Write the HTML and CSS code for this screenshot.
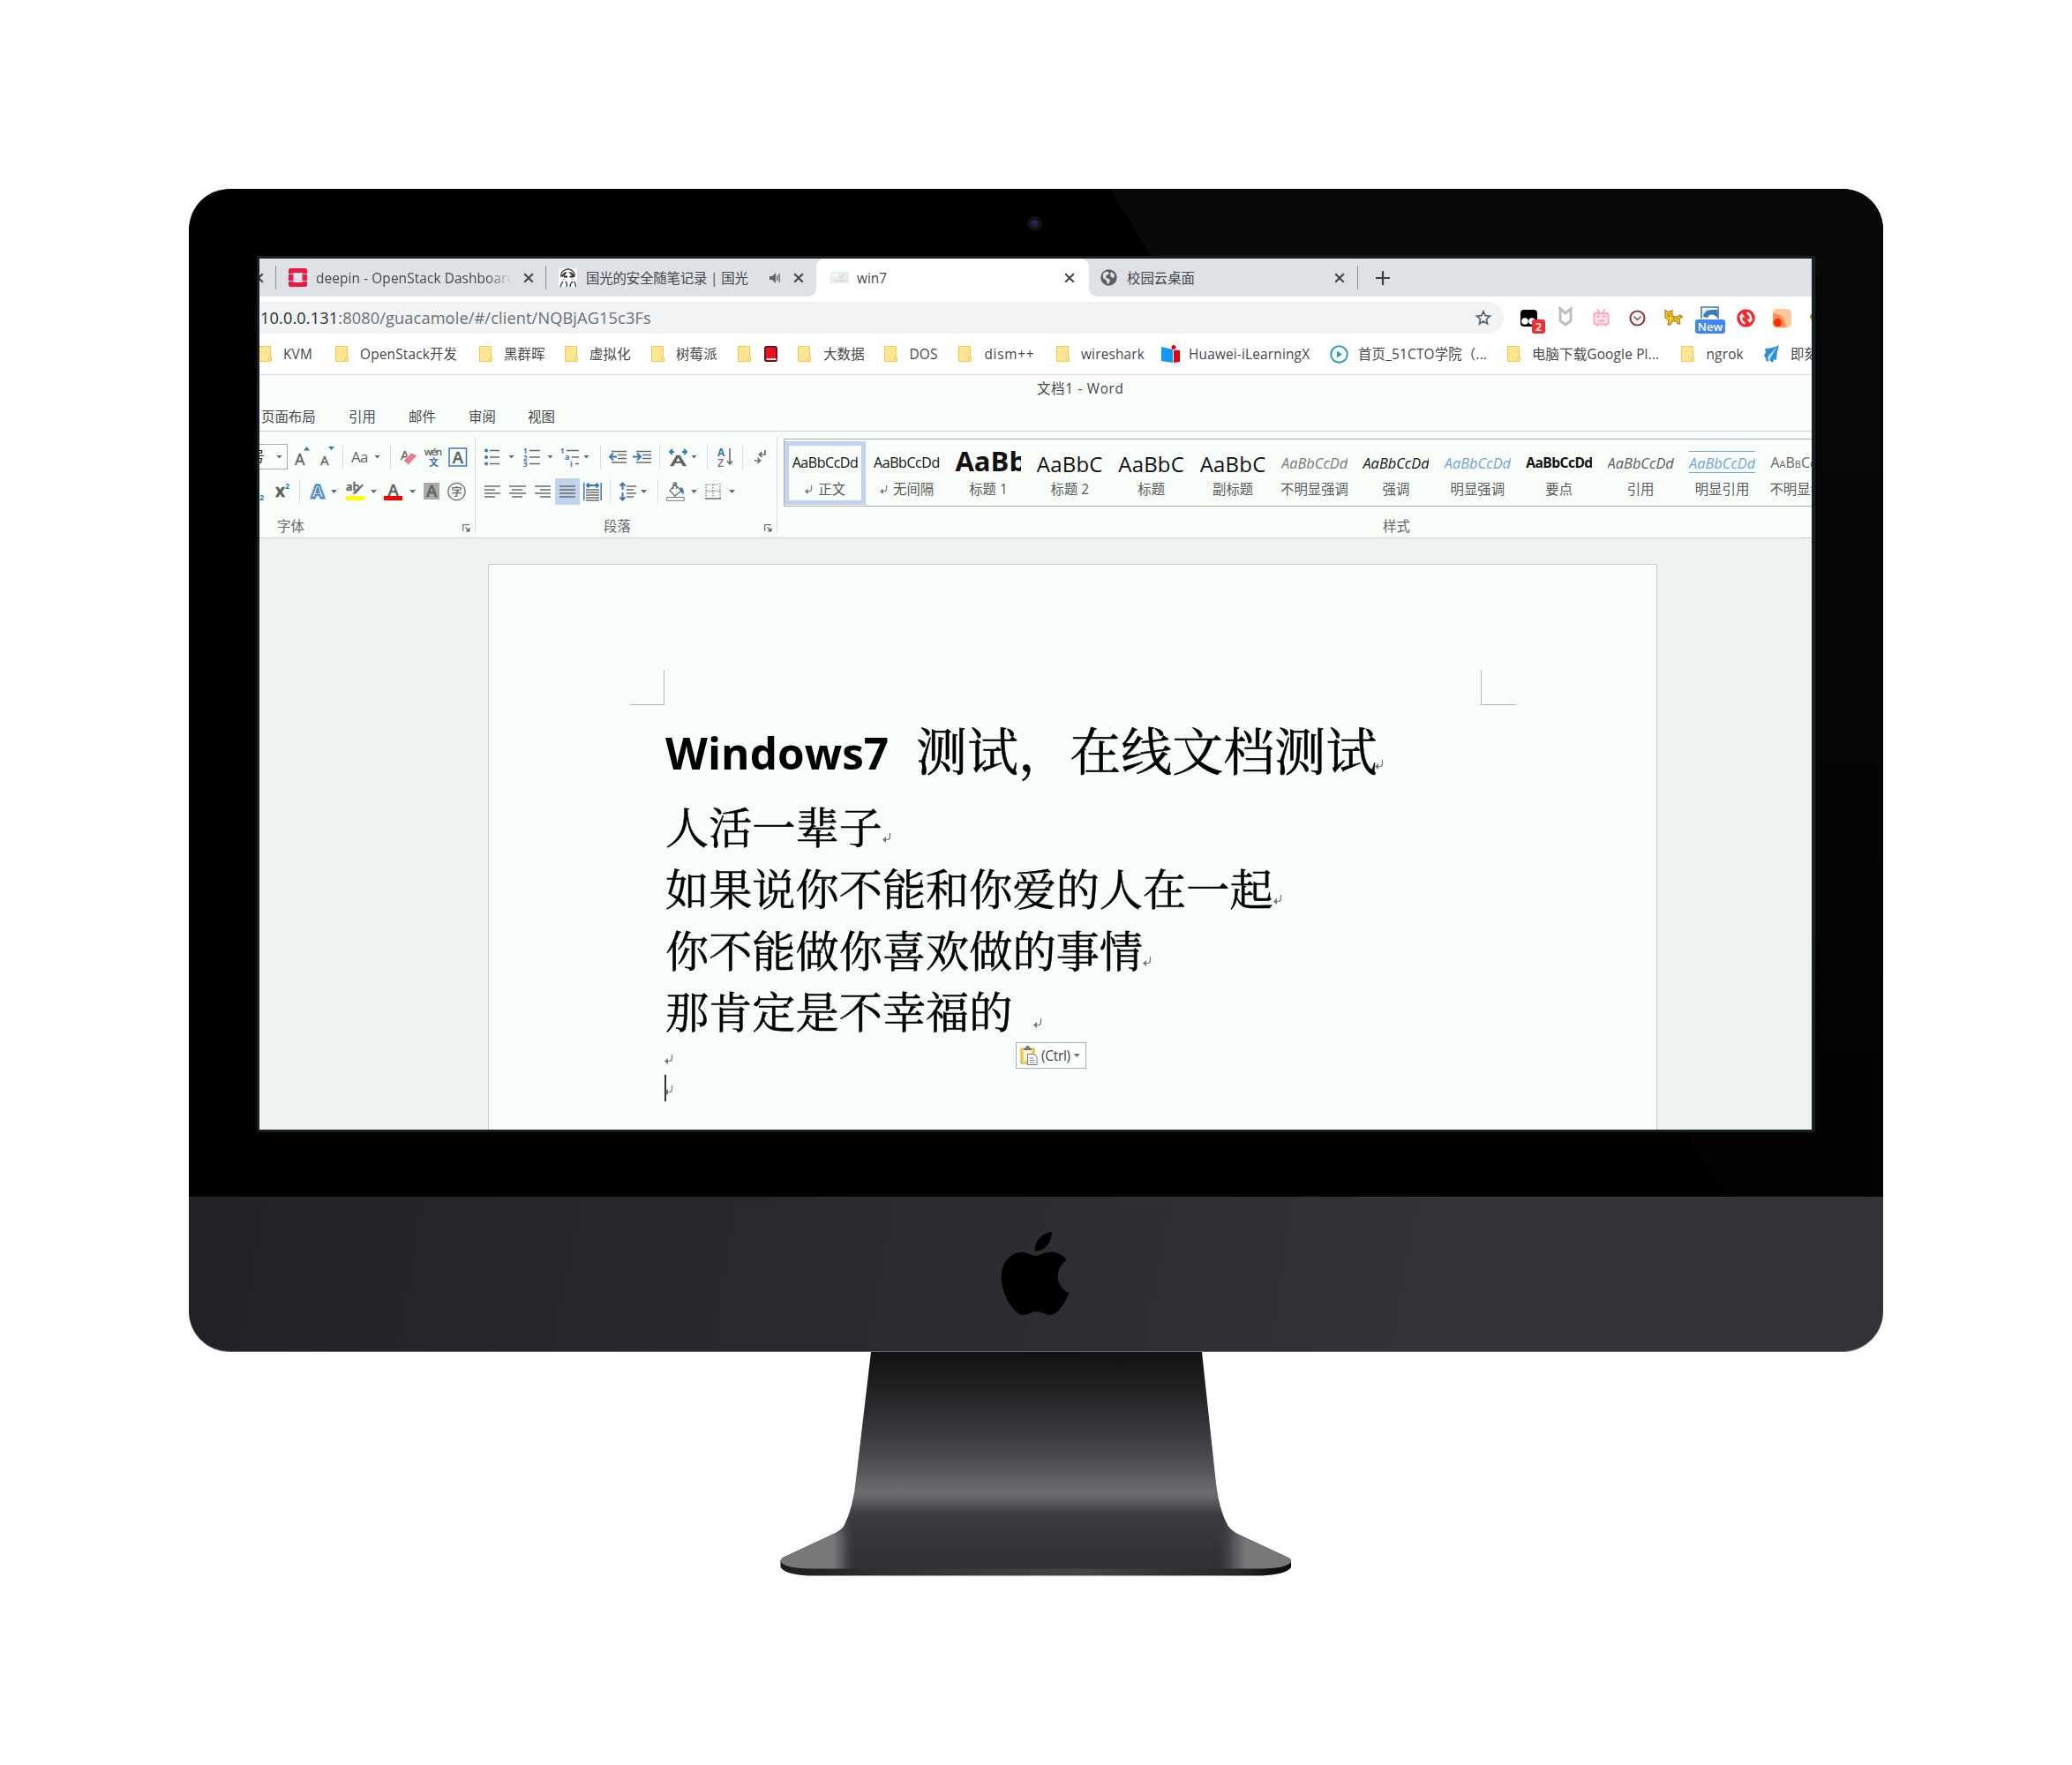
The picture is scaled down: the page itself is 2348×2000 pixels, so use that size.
FILE: index.html
```html
<!DOCTYPE html>
<html lang="zh-CN">
<head>
<meta charset="utf-8">
<title>文档1 - Word</title>
<link rel="stylesheet" href="styles.css">
</head>
<body>
<svg class="defs" width="0" height="0">
  <defs>
    <symbol id="folder" viewBox="0 0 15 18"><path d="M.5.5h13v12.500h1.000v4.500H.5z" fill="#ffe694" stroke="#efca55"/><path d="M11.500 17.500v-4l2-1.500" fill="none" stroke="#efca55"/></symbol>
    <symbol id="close" viewBox="0 0 12 12"><path d="M1.200 1.200l9.600 9.600M10.800 1.200L1.200 10.800" stroke="#45494d" stroke-width="2.200" fill="none"/></symbol>
    <symbol id="ret" viewBox="0 0 10 11"><path d="M8.500 0v4.500q0 3-3 3H2" fill="none" stroke="#777" stroke-width="1.200"/><path d="M0 7.500l4-3.500v7z" fill="#777"/></symbol>
    <symbol id="launch" viewBox="0 0 9 9"><path d="M.7 8V.7H8" fill="none" stroke="#777" stroke-width="1.300"/><path d="M3.500 3.500l3 3" stroke="#666" stroke-width="1.300"/><path d="M8.500 3.500v5h-5z" fill="#666"/></symbol>
  </defs>
</svg>
<main class="imac">
  <section class="bezel">
    <div class="camera"></div>
    <div class="screen">
      <div class="tabs">
        <svg class="cut" width="5" height="12" viewBox="7 0 5 12"><use href="#close" width="12" height="12"/></svg>
        <i class="vr"></i>
        <svg width="21" height="21" viewBox="0 0 21 21"><path fill="#ed1944" d="M2 0h17q2 0 2 2v4h-5.500V5h-10v1H0V2q0-2 2-2zM0 7h5.500v7H0zM15.500 7H21v7h-5.500zM0 15h5.500v1h10v-1H21v4q0 2-2 2H2q-2 0-2-2z"/></svg>
        <span class="fade">deepin - OpenStack Dashboard</span>
        <svg width="12" height="12"><use href="#close"/></svg>
        <i class="vr"></i>
        <svg width="21" height="21" viewBox="0 0 21 21"><path fill="#fff" d="M0 0h21v21H0z"/><path d="M3 10Q2 5 6 2.500q5-3 9 0 4 3 3 7M2 21q1-4 3-6M9 21q1-4-1-6M13 21q0-4 3-6M19.500 21q0-4-2-6" fill="none" stroke="#333" stroke-width="1.300"/><path d="M3.500 9q2-5 6-5l-2 3-3 3zM11 4q6 0 7 6l-3-2zM6 8.500h4v2H6zM12.500 8.500h4v2h-4z" fill="#222"/><path d="M5 12.500h2M15 12.500h2" stroke="#f3a7b5" stroke-width="1.500"/></svg>
        <span class="cn">国光的安全随笔记录 | 国光</span>
        <svg width="13" height="14" viewBox="0 0 13 14"><path d="M0 5h3l4-4v12L3 9H0z" fill="#5f6368"/><path d="M8.700 4v6M11.200 2v10" stroke="#5f6368" stroke-width="1.300"/></svg>
        <svg width="12" height="12"><use href="#close"/></svg>
        <div class="tab-active">
          <svg width="21" height="13" viewBox="0 0 21 13"><path fill="#e9eeec" d="M0 0h21v13H0z"/><path d="M3 10h15M10 5l2 2 4-5" stroke="#c8d2cd" fill="none"/><path d="M1 2h8v3H1z" fill="#f8fbf9"/></svg>
          <span>win7</span>
          <svg width="12" height="12"><use href="#close"/></svg>
        </div>
        <svg width="19" height="19" viewBox="0 0 19 19"><circle cx="9.500" cy="9.500" r="9.200" fill="#5b5f64"/><path d="M3 5q3-3 6-2l1 2-3 2-1 3 4 1 1 2-2 4q-2-1-2-4l-4-3zM12 3l4 3-1 4-3-1-1-3z" fill="#dee1e6"/></svg>
        <span>校园云桌面</span>
        <svg width="12" height="12"><use href="#close"/></svg>
        <i class="vr"></i>
        <svg width="16" height="16" viewBox="0 0 16 16"><path d="M8 0v16M0 8h16" stroke="#3c4043" stroke-width="2.200"/></svg>
      </div>
      <div class="address">
        <div class="omnibox"><span class="url"><b>10.0.0.131</b>:8080/guacamole/#/client/NQBjAG15c3Fs</span>
          <svg width="18" height="18" viewBox="0 0 18 18"><path d="M9 1.800l2.100 4.900 5.300.5-4 3.500 1.200 5.200L9 13.100l-4.600 2.800 1.200-5.200-4-3.500 5.300-.5z" fill="none" stroke="#5f6368" stroke-width="1.700"/></svg>
        </div>
        <div class="exts">
          <div class="ext"><svg width="19" height="19" viewBox="0 0 19 19"><rect width="19" height="19" rx="4"/><circle cx="5" cy="13" r="3.800" fill="#fff"/><circle cx="13" cy="13" r="3.800" fill="#fff"/></svg><em class="badge red">2</em></div>
          <div class="ext"><svg width="16" height="20" viewBox="0 0 16 20"><path d="M2 0v13.500l6 4.500 6-4.500V0L8 5z" fill="none" stroke="#bfbfbf" stroke-width="3"/></svg></div>
          <div class="ext"><svg width="19" height="20" viewBox="0 0 19 20"><g fill="none" stroke="#ffa9bf" stroke-width="2"><rect x="1.500" y="5" width="16" height="12.500" rx="1.500" fill="#ffe3ea"/><path d="M5 .5L8 5M14 .5L11 5M4.500 9l3-1M14.500 9l-3-1M6 13l2 1 1.500-1 1.500 1 2-1M5 18v2M14 18v2"/></g></svg></div>
          <div class="ext"><svg width="19" height="19" viewBox="0 0 19 19"><circle cx="9.500" cy="9.500" r="8" fill="none" stroke="#8c3f44" stroke-width="2.200"/><path d="M5.500 7.500l4 4 4-4" fill="none" stroke="#8c3f44" stroke-width="1.400"/></svg></div>
          <div class="ext"><svg width="21" height="18" viewBox="0 0 21 18"><path d="M1 0l2 2h4l2-2v7l3 1h4l1-2 3 1v2h-2l-1 3 1 4h-3l-1-3H9l-2 4H4l1-5-4-3z" fill="#f6c61c" stroke="#9b6b12"/><path d="M3.500 4.500h1M6.500 4.500h1M3.500 7h3M10 10h2M14 10h1" stroke="#5d3c05"/></svg></div>
          <div class="ext"><svg class="up" width="21" height="14" viewBox="0 0 21 14"><path d="M1 14V1h19v13" fill="#fff" stroke="#3b7cb5" stroke-width="1.600"/><path d="M3 12q1-8 10-8h6v9q-4-5-9-3l-2 3z" fill="#3b7cb5"/><path d="M2 8q3-4 8-5" stroke="#b9d4ea" fill="none"/></svg><em class="badge blue">New</em></div>
          <div class="ext"><svg width="21" height="21" viewBox="0 0 21 21"><circle cx="10.500" cy="10.500" r="10.300" fill="#ee2b2e"/><path d="M9.500 16.500Q5 15 5 10V8M11.500 4.500Q16 6 16 11v2" fill="none" stroke="#fff" stroke-width="2.400"/><path d="M2.500 9.500L6 5l3.500 4.500zM11.500 11.500h7L15 16z" fill="#fff"/></svg></div>
          <div class="ext"><svg width="21" height="21" viewBox="0 0 21 21"><rect width="21" height="21" rx="5" fill="#ffc99d"/><path d="M0 5q13 0 15 16H5q-5 0-5-5z" fill="#ff8b52"/><circle cx="5.500" cy="15.500" r="4.500" fill="#ff2a00"/></svg></div>
          <div class="ext last-ext"><svg width="8" height="12" viewBox="0 0 8 12"><path d="M6 0Q0 1 0 6h8V0z" fill="#5b9e2f"/><path d="M0 6q1 5 7 6V6z" fill="#f2c014"/><path d="M3 4h4v5H3z" fill="#2b6fd0"/></svg></div>
        </div>
      </div>
      <div class="bookmarks">
        <svg width="15" height="18"><use href="#folder"/></svg><span>KVM</span>
        <svg width="15" height="18"><use href="#folder"/></svg><span>OpenStack开发</span>
        <svg width="15" height="18"><use href="#folder"/></svg><span>黑群晖</span>
        <svg width="15" height="18"><use href="#folder"/></svg><span>虚拟化</span>
        <svg width="15" height="18"><use href="#folder"/></svg><span>树莓派</span>
        <svg width="15" height="18"><use href="#folder"/></svg>
        <svg width="15" height="18" viewBox="0 0 15 18"><rect x=".8" y=".8" width="13.400" height="16.400" rx="2" fill="#e81123" stroke="#4a1014" stroke-width="1.500"/><path d="M2.500 14h11v2h-11z" fill="#f3dede"/></svg>
        <svg width="15" height="18"><use href="#folder"/></svg><span>大数据</span>
        <svg width="15" height="18"><use href="#folder"/></svg><span>DOS</span>
        <svg width="15" height="18"><use href="#folder"/></svg><span class="wide">dism++</span>
        <svg width="15" height="18"><use href="#folder"/></svg><span>wireshark</span>
        <svg width="21" height="20" viewBox="0 0 21 20"><path d="M0 2l13 3v15L0 18z" fill="#1498f5"/><path d="M14 6h7v13l-7 1z" fill="#e60012"/><circle cx="14" cy="2.500" r="2.500" fill="#e60012"/></svg><span>Huawei-iLearningX</span>
        <svg width="21" height="21" viewBox="0 0 21 21"><circle cx="10.500" cy="10.500" r="9.300" fill="#fff" stroke="#2ba3ae" stroke-width="2"/><path d="M8 6.500l6 4-6 4z" fill="#2ba3ae"/></svg><span>首页_51CTO学院（...</span>
        <svg width="15" height="18"><use href="#folder"/></svg><span>电脑下载Google Pl...</span>
        <svg width="15" height="18"><use href="#folder"/></svg><span>ngrok</span>
        <svg width="19" height="20" viewBox="0 0 19 20"><path d="M18 0q-3 9-3 17l-3-1-1 4-4-3-3 2-1-4-2-3 2-4-1-4q9 0 16-4z" fill="#2b8fdc"/><path d="M16 2L6 12l-1 3 2 3 2-5z" fill="#bfe3fa"/></svg><span>即刻</span>
      </div>
      <div class="word">
        <div class="title">文档1 - Word</div>
        <div class="menu"><span>页面布局</span><span>引用</span><span>邮件</span><span>审阅</span><span>视图</span></div>
        <div class="ribbon">
          <div class="group font">
            <div class="tools">
              <div class="size"><span>号</span><i class="caret"></i></div>
              <svg width="17" height="28" viewBox="0 0 17 28"><text x="0" y="23" class="ic" font-size="18">A</text><path d="M10 6.500h7L13.500 2z" fill="#3a76b5"/></svg>
              <svg width="17" height="28" viewBox="0 0 17 28"><text x="0" y="23" class="ic" font-size="15">A</text><path d="M9 2h7l-3.500 4z" fill="#3a76b5"/></svg>
              <i class="sep"></i>
              <span class="aa">Aa</span><i class="caret"></i>
              <i class="sep"></i>
              <svg width="19" height="22" viewBox="0 0 19 22"><text x="0" y="14" class="ic" font-size="15">A</text><path d="M3 15l9-9 7 3-10 11z" fill="#e5808c" stroke="#f8fdf9"/></svg>
              <svg width="21" height="24" viewBox="0 0 21 24"><text x="0" y="10" class="ic" font-size="11.500" textLength="20">wén</text><text x="5" y="22" class="ib" font-size="11">文</text></svg>
              <svg width="22" height="22" viewBox="0 0 22 22"><rect x="1" y="1" width="19.500" height="20" fill="none" stroke="#3f78b2" stroke-width="1.500"/><text x="4.700" y="17.500" class="ic" font-weight="600" font-size="18.500">A</text></svg>
            </div>
            <div class="tools second">
              <svg width="6" height="28" viewBox="0 0 6 28"><text x="0" y="24" class="ib" font-size="9">2</text></svg>
              <svg width="17" height="28" viewBox="0 0 17 28"><text x="0" y="20" class="ic" font-weight="700" font-size="19">x</text><text x="11" y="11" class="ib" font-size="9">2</text></svg>
              <i class="sep"></i>
              <svg width="18" height="24" viewBox="0 0 18 24"><text x="2" y="19" font-size="20" font-weight="700" font-family="Open Sans" fill="#fff" stroke="#9ec3ea" stroke-width="4">A</text><text x="2" y="19" font-size="20" font-weight="700" font-family="Open Sans" fill="#fff" stroke="#3a76b5" stroke-width="1.300">A</text></svg><i class="caret"></i>
              <svg width="21" height="24" viewBox="0 0 21 24"><text x="0" y="11" class="ic" font-weight="600" font-size="13">ab</text><path d="M7 16l2-4L19 3l1 2-8 9z" fill="#6b6b6b" stroke="#f8fdf9" stroke-width=".5"/><path d="M0 17h21v5H0z" fill="#ff0"/></svg><i class="caret"></i>
              <svg width="21" height="24" viewBox="0 0 21 24"><text x="4.500" y="17" class="ic" font-weight="600" font-size="18.500">A</text><path d="M0 17h21v5H0z" fill="#f00"/></svg><i class="caret"></i>
              <svg width="18" height="20" viewBox="0 0 18 20"><path d="M0 0h18v19H0z" fill="#aaa"/><text x="3" y="16" class="ic" font-weight="600" font-size="18.500">A</text></svg>
              <svg width="21" height="22" viewBox="0 0 21 22"><circle cx="10.500" cy="11" r="9.700" fill="none" stroke="#6b6b6b" stroke-width="1.300"/><text x="4.500" y="15.500" class="ic" font-size="12">字</text></svg>
            </div>
            <div class="caption">字体<svg width="9" height="9"><use href="#launch"/></svg></div>
          </div>
          <div class="group para">
            <div class="tools">
              <svg width="18" height="20" viewBox="0 0 18 20"><g fill="#3a76b5"><circle cx="2" cy="2.500" r="2"/><circle cx="2" cy="10" r="2"/><circle cx="2" cy="17.500" r="2"/></g><path d="M6 2.500h11M6 10h11M6 17.500h11" class="ln"/></svg><i class="caret"></i>
              <svg width="19" height="22" viewBox="0 0 19 22"><text class="ib" font-size="8" y="7">1</text><text class="ib" font-size="8" y="14.500">2</text><text class="ib" font-size="8" y="22">3</text><path d="M7 3.500h12M7 11h12M7 18.500h12" class="ln"/></svg><i class="caret"></i>
              <svg width="22" height="22" viewBox="0 0 22 22"><text class="ib" font-size="8" y="7">1</text><text class="ib" font-size="9" x="5" y="14">a</text><text class="ib" font-size="9" x="11" y="22">i</text><path d="M7 3.500h14M13 11h8M17 18.500h4" class="ln"/></svg><i class="caret"></i>
              <i class="sep"></i>
              <svg width="21" height="16" viewBox="0 0 21 16"><path d="M4 1.500h17M11 5.500h10M11 9.500h10M4 14h17" class="ln"/><path d="M10 7.500H3M6 3.500l-4 4 4 4" class="ar"/></svg>
              <svg width="21" height="16" viewBox="0 0 21 16"><path d="M4 1.500h17M11 5.500h10M11 9.500h10M4 14h17" class="ln"/><path d="M0 7.500h8M5 3.500l4 4-4 4" class="ar"/></svg>
              <i class="sep"></i>
              <svg width="21" height="22" viewBox="0 0 21 22"><text x="1.500" y="20.500" class="ic" font-weight="600" font-size="17" textLength="18" lengthAdjust="spacingAndGlyphs">A</text><path d="M6 5H1M4 2L1 5l3 3M15 5h5M17 2l3 3-3 3" class="ar"/></svg><i class="caret"></i>
              <i class="sep"></i>
              <svg width="19" height="24" viewBox="0 0 19 24"><text x="0" y="10.500" class="ib" font-size="12">A</text><text x="0" y="22.500" font-family="Open Sans" fill="#9558b5" font-weight="600" font-size="12.500">Z</text><path d="M14 2v18M11 16.500l3 3.500 3-3.500" fill="none" stroke="#6b6b6b" stroke-width="1.600"/></svg>
              <i class="sep"></i>
              <svg width="14" height="18" viewBox="0 0 14 18"><path d="M12 1v5H6M8.500 3L5.500 6l3 3M0 13h6M3.500 10l3 3-3 3" fill="none" stroke="#6b6b6b" stroke-width="1.700"/></svg>
            </div>
            <div class="tools second">
              <svg width="18" height="14" viewBox="0 0 18 14"><path d="M0 1h18M0 5h12M0 9h18M0 13h12" class="ln"/></svg>
              <svg width="19" height="14" viewBox="0 0 19 14"><path d="M0 1h19M3 5h12M0 9h19M3 13h12" class="ln"/></svg>
              <svg width="18" height="14" viewBox="0 0 18 14"><path d="M0 1h18M6 5h12M0 9h18M6 13h12" class="ln"/></svg>
              <svg class="on" width="28" height="30" viewBox="0 0 28 30"><path d="M5 9h18M5 13h18M5 17h18M5 21h18" class="ln"/></svg>
              <svg width="21" height="22" viewBox="0 0 21 22"><path d="M.8 1v20M20.200 1v20" stroke="#3a76b5" stroke-width="1.500"/><path d="M4 4h13M6.500 1.500L4 4l2.500 2.500M14.500 1.500L17 4l-2.500 2.500" class="ar"/><path d="M3 9h15M3 12h15M3 15h15M3 18h15M3 21h15" class="ln"/></svg>
              <i class="sep"></i>
              <svg width="19" height="22" viewBox="0 0 19 22"><path d="M3.500 1v8M.5 4.500l3-3 3 3M3.500 12v9M.5 17.500l3 3 3-3" class="ar"/><path d="M8 5h11M8 9h8M8 13h11M8 17h8" class="ln"/></svg><i class="caret"></i>
              <i class="sep"></i>
              <svg width="21" height="22" viewBox="0 0 21 22"><path d="M16 6q5 1 3.500 9-1-3-4-4z" fill="#3a76b5"/><path d="M10 3l7 7-7 6-6-6zM8 8V2q2-2 3.500 0v6" fill="#f8fdf9" stroke="#6b6b6b" stroke-width="1.300"/><path d="M.7 17.500h19.600v3.800H.7z" fill="#fff" stroke="#777"/></svg><i class="caret"></i>
              <svg width="18" height="18" viewBox="0 0 18 18"><path d="M1 1h16v15M1 1v15M9 1v15M1 8.500h16" fill="none" stroke="#777" stroke-width="1.200" stroke-dasharray="1.600 1.400"/><path d="M0 17h18" class="ln"/></svg><i class="caret"></i>
            </div>
            <div class="caption">段落<svg width="9" height="9"><use href="#launch"/></svg></div>
          </div>
          <div class="group styles">
            <div class="gallery">
              <div class="style sel"><p>AaBbCcDd</p><span><svg width="9" height="10"><use href="#ret"/></svg>正文</span></div>
              <div class="style"><p>AaBbCcDd</p><span><svg width="9" height="10"><use href="#ret"/></svg>无间隔</span></div>
              <div class="style"><p class="h1">AaBb</p><span>标题 1</span></div>
              <div class="style"><p class="h2">AaBbC</p><span>标题 2</span></div>
              <div class="style"><p class="h2">AaBbC</p><span>标题</span></div>
              <div class="style"><p class="h2">AaBbC</p><span>副标题</span></div>
              <div class="style"><p class="it gray">AaBbCcDd</p><span>不明显强调</span></div>
              <div class="style"><p class="it">AaBbCcDd</p><span>强调</span></div>
              <div class="style"><p class="it blue-t">AaBbCcDd</p><span>明显强调</span></div>
              <div class="style"><p class="bold">AaBbCcDd</p><span>要点</span></div>
              <div class="style"><p class="it gray2">AaBbCcDd</p><span>引用</span></div>
              <div class="style"><p class="it blue-t ruled">AaBbCcDd</p><span>明显引用</span></div>
              <div class="style"><p class="caps">AaBbCcDd</p><span>不明显参考</span></div>
            </div>
            <div class="caption">样式</div>
          </div>
        </div>
        <div class="workspace">
          <article class="paper">
            <div class="corners"><i class="cl"></i><i class="cr"></i></div>
            <h1><b>Windows7</b><span>测试，在线文档测试</span><svg width="10" height="11"><use href="#ret"/></svg></h1>
            <p>人活一辈子<svg width="10" height="11"><use href="#ret"/></svg></p>
            <p>如果说你不能和你爱的人在一起<svg width="10" height="11"><use href="#ret"/></svg></p>
            <p>你不能做你喜欢做的事情<svg width="10" height="11"><use href="#ret"/></svg></p>
            <p class="last">那肯定是不幸福的<svg width="10" height="11"><use href="#ret"/></svg></p>
            <div class="empty"><svg width="10" height="11"><use href="#ret"/></svg></div>
            <div class="empty cursor"><svg width="10" height="11"><use href="#ret"/></svg></div>
            <div class="paste"><svg width="20" height="22" viewBox="0 0 20 22"><path d="M1 3h15v17H1z" fill="#f7d65c" stroke="#c9a63a"/><path d="M4 4h9v13H4z" fill="#fdf6d8"/><path d="M4 5V3h2q0-3 2.500-3T11 3h2v2z" fill="#777"/><path d="M8.500 9.500h7l3.500 3.500v8.500H8.500z" fill="#fff" stroke="#777"/><path d="M10.500 14h5M10.500 16.500h6M10.500 19h6" stroke="#888"/></svg><span>(Ctrl)</span><i class="caret"></i></div>
          </article>
        </div>
      </div>
    </div>
  </section>
  <section class="chin">
    <svg width="94" height="94" viewBox="0 0 24 24"><path d="M12.152 6.896c-.948 0-2.415-1.078-3.960-1.040-2.040.027-3.910 1.183-4.961 3.014-2.117 3.675-.546 9.103 1.519 12.090 1.013 1.454 2.208 3.090 3.792 3.039 1.520-.065 2.090-.987 3.935-.987 1.831 0 2.350.987 3.960.948 1.637-.026 2.676-1.480 3.676-2.948 1.156-1.688 1.636-3.325 1.662-3.415-.039-.013-3.182-1.221-3.220-4.857-.026-3.040 2.480-4.494 2.597-4.559-1.429-2.090-3.623-2.324-4.390-2.376-2-.156-3.675 1.090-4.610 1.090zM15.530 3.830c.843-1.012 1.400-2.427 1.245-3.830-1.207.052-2.662.805-3.532 1.818-.780.896-1.454 2.338-1.273 3.714 1.338.104 2.715-.688 3.559-1.701"/></svg>
  </section>
  <svg class="stand" width="580" height="256" viewBox="884 1532 580 256">
    <defs>
      <linearGradient id="neck" gradientUnits="userSpaceOnUse" x1="0" y1="1532" x2="0" y2="1778">
        <stop offset="0" stop-color="#101112"/><stop offset=".14" stop-color="#1c1e1f"/><stop offset=".29" stop-color="#2f2e33"/><stop offset=".48" stop-color="#48494d"/><stop offset=".56" stop-color="#59595d"/><stop offset=".64" stop-color="#6d6b70"/><stop offset=".665" stop-color="#67656a"/><stop offset=".755" stop-color="#3c3a3f"/><stop offset="1" stop-color="#322f34"/>
      </linearGradient>
      <linearGradient id="wl" gradientUnits="userSpaceOnUse" x1="884" y1="0" x2="970" y2="0"><stop offset=".7" stop-color="#77787a"/><stop offset=".82" stop-color="#5a595e"/><stop offset="1" stop-color="#38363b" stop-opacity="0"/></linearGradient>
      <linearGradient id="wr" gradientUnits="userSpaceOnUse" x1="1464" y1="0" x2="1378" y2="0"><stop offset=".6" stop-color="#77787a"/><stop offset=".75" stop-color="#5a595e"/><stop offset="1" stop-color="#38363b" stop-opacity="0"/></linearGradient>
      <linearGradient id="edge"><stop offset="0" stop-color="#1c1d1d"/><stop offset=".2" stop-color="#303030"/><stop offset=".58" stop-color="#454545"/><stop offset=".9" stop-color="#262626"/><stop offset="1" stop-color="#060606"/></linearGradient>
      <linearGradient id="fadey" gradientUnits="userSpaceOnUse" x1="0" y1="1700" x2="0" y2="1742"><stop offset="0" stop-color="#000"/><stop offset="1" stop-color="#fff"/></linearGradient>
      <mask id="m"><path d="M884 1695h580v93H884z" fill="url(#fadey)"/></mask>
      <clipPath id="body"><path id="shape" d="M987 1532H1362L1377.500 1676Q1381 1710 1391.500 1729Q1394 1733 1401 1737.500L1460 1765Q1464 1767 1463 1770Q1458 1777 1430 1777.500H918Q890 1777 885 1770Q884 1767 887 1765L947 1737Q954 1733 956.500 1729Q967 1708 970 1676Z"/></clipPath>
    </defs>
    <path d="M884.500 1768V1776Q890 1784 915 1785.500H1430Q1458 1784 1463 1776V1768Z" fill="url(#edge)"/>
    <use href="#shape" fill="url(#neck)"/>
    <g clip-path="url(#body)"><g mask="url(#m)"><path d="M884 1695h86v83h-86z" fill="url(#wl)"/><path d="M1378 1695h86v83h-86z" fill="url(#wr)"/></g></g>
  </svg>
</main>
</body>
</html>
```
FILE: styles.css
```css
* { box-sizing: border-box; }
body { margin: 0; background: #fff; font: 15.4px/20px "Open Sans", "Noto Sans CJK SC", sans-serif; color: #45474a; height: 2000px; overflow: hidden; }
svg { display: block; overflow: visible; flex: none; }
.defs { position: absolute; }
h1, p { margin: 0; font-weight: 400; }

.imac { width: 1920px; margin: 214px auto 0; display: flex; flex-direction: column; align-items: center; }
.bezel { position: relative; width: 100%; height: 1142px; padding: 76px 77px 73px; background: #000; border-radius: 46px 46px 0 0; overflow: hidden; }
.bezel::before { content: ""; position: absolute; inset: 0; background: linear-gradient(#090909, #020202); clip-path: polygon(1044px 0, 100% 0, 100% 100%, 1741px 100%); }
.camera { position: absolute; left: 950px; top: 31px; width: 17px; height: 17px; border-radius: 50%; background: radial-gradient(circle, transparent 4px, #121212 4.5px), linear-gradient(#222a5c 35%, #35104a 65%); }
.screen { position: relative; width: 1766px; height: 993px; border: solid #162024; border-width: 3px 4px 3px 3px; background: #fff; overflow: hidden; display: flex; flex-direction: column; }

.tabs { height: 43px; flex: none; display: grid; grid-template-columns: 18px 15px 31px 235px 25px 15px 31px 208px 27px 26px 322px 30px 235px 26px 21px 30px; align-items: center; background: #dee1e6; white-space: nowrap; }
.tabs span { padding-top: 2px; }
.tabs .cn { letter-spacing: -.15px; }
.vr { width: 1px; height: 27px; background: #8b8e93; }
.fade { width: 225px; overflow: hidden; -webkit-mask-image: linear-gradient(90deg, #000 86%, transparent 99%); mask-image: linear-gradient(90deg, #000 86%, transparent 99%); letter-spacing: .1px; }
.tab-active { width: 309px; height: 43px; padding: 0 16px; display: grid; grid-template-columns: 30px 235px 12px; align-items: center; background: #fff; border-radius: 9px 9px 0 0; position: relative; }
.tab-active::before, .tab-active::after { content: ""; position: absolute; bottom: 0; width: 9px; height: 9px; }
.tab-active::before { left: -9px; background: radial-gradient(circle at 0 0, transparent 8.5px, #fff 9px); }
.tab-active::after { right: -9px; background: radial-gradient(circle at 100% 0, transparent 8.5px, #fff 9px); }

.address { height: 48px; flex: none; padding-top: 6px; display: flex; gap: 8px; background: #fff; }
.omnibox { flex: none; width: 1410px; height: 36px; padding: 0 14px 0 1px; display: flex; align-items: center; justify-content: space-between; background: #f1f3f4; border-radius: 0 18px 18px 0; }
.url { font-size: 18.2px; letter-spacing: .12px; color: #6b6f73; white-space: nowrap; }
.url b { font-weight: 400; color: #2a2b2e; }
.exts { flex: none; display: flex; height: 36px; }
.ext { flex: none; width: 41px; position: relative; display: flex; align-items: center; justify-content: center; }
.last-ext { justify-content: flex-start; padding-left: 11px; }
.ext .up { margin-bottom: 12px; }
.badge { position: absolute; top: 20px; height: 16px; border-radius: 3px; color: #fff; font: 600 13px/17px "Open Sans", sans-serif; text-align: center; }
.red { left: 24px; width: 15px; background: #eb2f33; }
.blue { left: 4px; width: 34px; background: #4285f4; }

.bookmarks { height: 41px; flex: none; padding-bottom: 6px; display: grid; grid-template-columns: 27px 59px 28px 135px 28px 69px 28px 70px 28px 69.500px 30px 38.500px 29px 69px 28.500px 55.500px 29.500px 81.500px 28px 91px 31px 160px 32px 168.500px 28.500px 169px 28.500px 64.500px 31px 40px; align-items: center; background: #fff; border-bottom: 1px solid #d9dbdf; white-space: nowrap; letter-spacing: .18px; }
.bookmarks span { padding-top: 1px; }
.wide { letter-spacing: .7px; }
.bookmarks > svg:first-child { margin-left: -1px; }

.word { flex: 1; display: flex; flex-direction: column; background: #f8fdf9; }
.title { height: 32px; padding: 6px 0 0 881px; letter-spacing: .7px; }
.menu { height: 32px; padding: 6px 0 0 2px; display: grid; grid-template-columns: 99px 68px 68px 67px 60px; border-bottom: 1px solid #cfd3d0; }
.ribbon { height: 121px; flex: none; display: flex; border-bottom: 1px solid #cdd1ce; }
.group { display: flex; flex-direction: column; position: relative; }
.font { width: 245px; }
.para { width: 342px; padding-left: 10px; }
.font::after, .para::after { content: ""; position: absolute; right: 0; top: 6px; width: 1px; height: 109px; background: #dcdfdd; }
.tools { height: 39px; margin-top: 9px; display: grid; align-items: center; }
.second { height: 40px; margin-top: 0; }
.font .tools { grid-template-columns: 40px 29px 25px 10px 26px 18px 12px 27px 27px 30px; }
.font .second { grid-template-columns: 18px 27px 12px 24px 17px 28px 15px 29px 16px 27px 31px; }
.para .tools { grid-template-columns: 27px 17px 27px 15px 26px 19px 9px 28px 30px 11px 25px 18px 12px 28px 14px 26px; }
.para .second { grid-template-columns: 28px 29px 23px 32px 30px 11px 24px 19px 10px 28px 16px 27px 55px; }
.sep { width: 1px; height: 28px; background: #dcdfdd; }
.caret { width: 7px; height: 4px; background: #6b6b6b; clip-path: polygon(0 0, 100% 0, 50% 100%); }
.size { width: 32px; height: 29px; border: 1px solid #ababab; border-left: 0; display: flex; align-items: center; justify-content: space-between; padding-right: 5px; }
.size span { width: 6px; overflow: hidden; direction: rtl; color: #222; }
.aa { font-size: 17px; letter-spacing: -.8px; color: #666; }
.ic { font-family: "Open Sans", "Noto Sans CJK SC", sans-serif; fill: #5f5f5f; stroke: #5f5f5f; stroke-width: .35px; }
.ib { font-family: "Open Sans", "Noto Sans CJK SC", sans-serif; font-weight: 700; fill: #3a76b5; }
.ln { fill: none; stroke: #6b6b6b; stroke-width: 1.5px; }
.ar { fill: none; stroke: #3a76b5; stroke-width: 2px; }
.on { background: #c1d3ef; }
.caption { display: flex; align-items: center; height: 22px; margin-top: 9px; color: #666; }
.font .caption { padding: 0 6px 0 20px; justify-content: space-between; }
.para .caption { padding: 0 6px 0 135px; justify-content: space-between; }
.caption svg { margin-top: 3px; }
.styles { width: 1172px; padding: 8px 0 0 7px; }
.styles .caption { padding-left: 679px; margin-top: 12px; }
.gallery { width: 1180px; height: 77px; border: 1px solid #aab0ad; display: flex; padding: 2px 0; overflow: hidden; }
.style { flex: none; width: 92.4px; height: 72px; padding-top: 6px; display: flex; flex-direction: column; align-items: center; border: 5px solid transparent; }
.style.sel { border-color: #c1d3ef; }
.style p { width: 75px; height: 34px; margin-top: -6px; line-height: 39px; font-size: 16px; letter-spacing: -.45px; color: #111; overflow: hidden; white-space: nowrap; }
.style span { height: 26px; padding-top: 5px; display: flex; align-items: center; gap: 6px; color: #5a5a5a; white-space: nowrap; }
.style .h1 { font-size: 31px; font-weight: 700; line-height: 34px; letter-spacing: 0; }
.style .h2 { font-size: 24px; line-height: 41px; letter-spacing: .2px; }
.style .it { font-style: italic; font-size: 16.4px; letter-spacing: 0; }
.style .bold { font-weight: 700; font-size: 15.6px; letter-spacing: -.55px; }
.style .gray { color: #777; }
.style .gray2 { color: #5a5a5a; }
.style .blue-t { color: #6fa3d8; }
.style .ruled { height: 25px; margin: 0 0 3px; line-height: 25px; border: solid #6fa9d8; border-width: 1.500px 0; }
.style .caps { font-variant: small-caps; color: #666; letter-spacing: 0; }

.workspace { flex: 1; background: #eff3f0; padding: 29px 175px 0 259px; }
.paper { position: relative; height: 700px; border: 1px solid #c9cecb; background: #f8fdf9; padding: 119px 159px 0 199px; color: #000; font-family: "Noto Serif CJK SC", "Noto Sans CJK SC", serif; }
.corners { display: flex; justify-content: space-between; margin: 0 0 17px -39px; }
.corners i { width: 40px; height: 40px; border-bottom: 1px solid #b5bab7; }
.corners .cl { width: 39px; border-right: 1px solid #b5bab7; }
.cr { border-left: 1px solid #b5bab7; }
.paper h1, .paper p { display: flex; align-items: center; white-space: nowrap; -webkit-text-stroke: .5px #000; }
.paper h1 span { margin-top: -9px; }
.paper h1 { height: 72px; margin-bottom: 12px; font-size: 58px; line-height: 72px; letter-spacing: .05px; }
.paper h1 b { width: 285px; font: 700 49.500px/72px "Open Sans", sans-serif; padding: 1px 0 0 1px; -webkit-text-stroke: 0; }
.paper p { height: 69.8px; font-size: 49.2px; line-height: 69.8px; padding-left: 1px; }
.paper h1 svg { margin: 28px 0 0 -2px; }
.paper p svg { margin-top: 30px; }
.paper .last svg { margin-left: 23px; }
.empty { height: 35px; padding-top: 16px; }
.empty.cursor { position: relative; }
.cursor::before { content: ""; position: absolute; left: 0; top: 4px; width: 1.500px; height: 30px; background: #333; }
.paste { position: absolute; left: 597px; top: 541px; width: 80px; height: 30px; padding: 0 4px; display: flex; align-items: center; gap: 4px; border: 1px solid #a9adaa; background: #fbfefc; font: 15.500px/20px "Open Sans", sans-serif; color: #444; letter-spacing: -.3px; }

.chin { width: 100%; height: 176px; padding-top: 40px; display: flex; justify-content: center; background: linear-gradient(100deg, #222126, #2e2c31 50%, #353338 75%, #343237); border-radius: 0 0 46px 46px; border-bottom: 1px solid #68666b; }
.chin svg { margin-right: 2px; }
```
